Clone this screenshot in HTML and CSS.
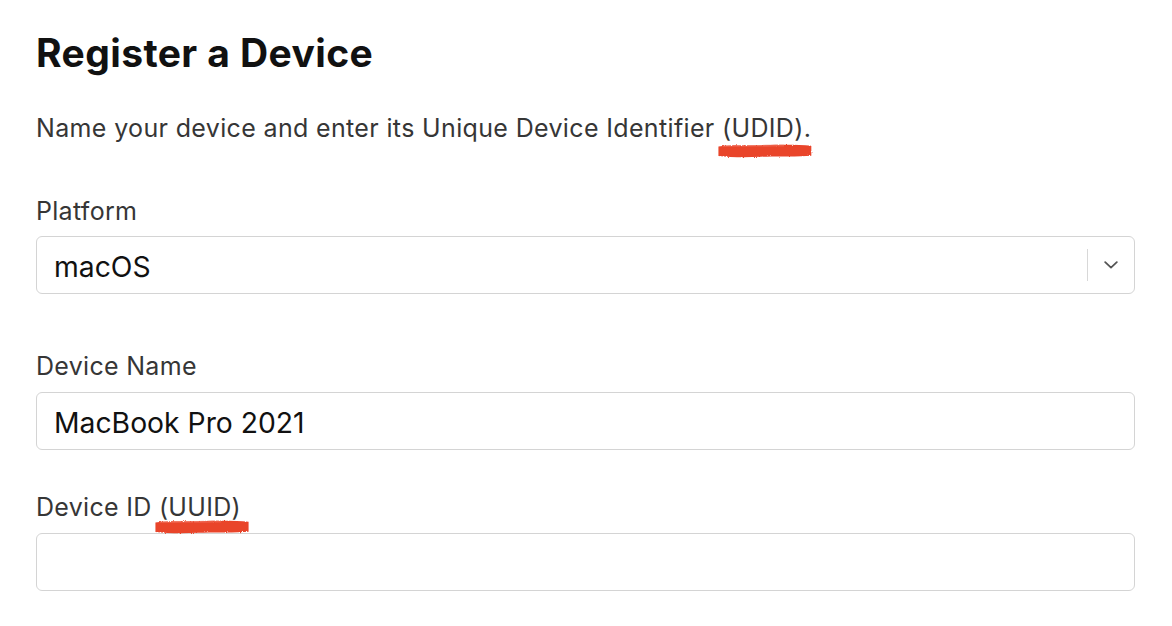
FILE: index.html
```html
<!DOCTYPE html>
<html lang="en">
<head>
<meta charset="utf-8">
<title>Register a Device</title>
<link rel="stylesheet" href="styles.css">
</head>
<body>
<main class="page">
  <h1 class="title">Register a Device</h1>
  <p class="intro">Name your device and enter its Unique Device Identifier <span class="marked">(UDID)<svg class="scribble scribble-1" viewBox="0 0 100 14" preserveAspectRatio="none"><use href="#scrib"/></svg></span>.</p>

  <div class="field field-platform">
    <div class="label">Platform</div>
    <div class="control select">
      <span class="value">macOS</span>
      <span class="divider"></span>
      <svg class="chevron" viewBox="0 0 14 8" width="14" height="8"><path d="M1.2 1.2l5.8 5.4 5.8-5.4" fill="none" stroke="#555" stroke-width="1.8" stroke-linecap="round" stroke-linejoin="round"/></svg>
    </div>
  </div>

  <div class="field field-name">
    <div class="label">Device Name</div>
    <div class="control input"><span class="value">MacBook Pro 2021</span></div>
  </div>

  <div class="field field-id">
    <div class="label">Device ID <span class="marked">(UUID)<svg class="scribble scribble-2" viewBox="0 0 100 14" preserveAspectRatio="none"><use href="#scrib"/></svg></span></div>
    <div class="control input"></div>
  </div>
</main>

<svg class="defs" width="0" height="0" aria-hidden="true">
  <defs>
    <filter id="rough" x="-5%" y="-30%" width="110%" height="160%">
      <feTurbulence type="fractalNoise" baseFrequency="0.9 0.7" numOctaves="2" seed="7" result="n"/>
      <feDisplacementMap in="SourceGraphic" in2="n" scale="2.5"/>
    </filter>
    <g id="scrib" filter="url(#rough)">
      <path d="M1.5 2.4 C12 1 30 1.8 50 1.2 S86 0.8 98.5 1.8 L98.5 11.8 C86 13 64 12 46 12.8 S14 13.2 1.5 12 Z" fill="#e9442b"/>
      <path d="M6 1.6 C25 0.8 50 1 70 0.8 L70 2.4 C50 2.6 25 2.8 6 3 Z" fill="#ef6a52" opacity="0.7"/>
    </g>
  </defs>
</svg>
</body>
</html>
```

FILE: styles.css
```css
html, body {
  margin: 0;
  padding: 0;
  background: #ffffff;
}

body {
  font-family: Inter, "Noto Sans", "Liberation Sans", sans-serif;
  color: #1d1d1f;
}

.page {
  padding: 29px 37px 0 36px;
  display: flex;
  flex-direction: column;
}

.title {
  margin: 0;
  font-size: 39px;
  line-height: 48px;
  font-weight: 700;
  color: #111111;
  letter-spacing: 0.4px;
}

.intro {
  margin: 36px 0 0;
  font-size: 25px;
  line-height: 30px;
  letter-spacing: 0.35px;
  color: #363636;
}

.marked {
  position: relative;
  display: inline-block;
}

.scribble {
  position: absolute;
  left: -5px;
  width: calc(100% + 14px);
  height: 14px;
  top: 31px;
}

.scribble-2 {
  top: 28px;
}

.field {
  display: flex;
  flex-direction: column;
}

.field-platform {
  margin-top: 53px;
}

.field-name {
  margin-top: 57px;
}

.field-id {
  margin-top: 42px;
}

.label {
  font-size: 25px;
  line-height: 30px;
  letter-spacing: 0.3px;
  color: #363636;
  margin-bottom: 10px;
}

.field-name .label,
.field-id .label {
  margin-bottom: 11px;
}

.control {
  box-sizing: border-box;
  height: 58px;
  border: 1.5px solid #d4d4d4;
  border-radius: 6px;
  display: flex;
  align-items: center;
  padding: 3px 16px 0 17px;
  background: #fff;
}

.value {
  font-size: 28.3px;
  color: #111111;
  flex: 1;
}

.divider {
  align-self: center;
  width: 1.5px;
  height: 32px;
  margin-top: -3px;
  background: #d8d8d8;
  margin-right: 16px;
}

.chevron {
  display: block;
  margin-top: -3px;
}

.defs {
  position: absolute;
  width: 0;
  height: 0;
}
```
